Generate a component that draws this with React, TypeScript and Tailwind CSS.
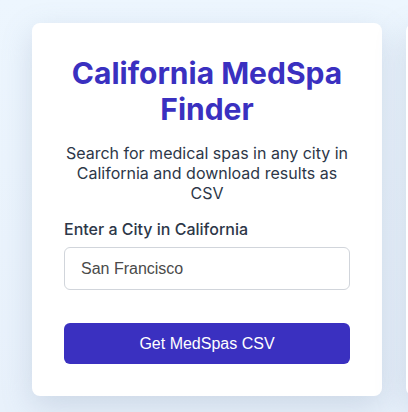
import React, { useState } from 'react';

const App: React.FC = () => {
  const [city, setCity] = useState('San Francisco');

  return (
    <div className="min-h-screen w-full overflow-hidden bg-gradient-to-b from-[#edf6fe] to-[#e8f1fb] pt-[23px] pl-8">
      <div className="flex gap-6 items-start">
        <div
          className="w-[350px] shrink-0 bg-white rounded-lg p-8 shadow-[0_10px_30px_rgba(120,140,170,0.25)]"
          style={{ fontFamily: 'Inter, "Noto Sans", sans-serif' }}
        >
          <h1 className="text-3xl font-bold text-center text-[#3a30c0] mb-4">California MedSpa Finder</h1>
          <p className="text-base leading-5 text-center text-[#2d3748] mb-4">
            Search for medical spas in any city in California and download results as CSV
          </p>
          <label className="block text-base leading-5 font-medium text-[#2d3748] mb-2">Enter a City in California</label>
          <input
            value={city}
            onChange={(e) => setCity(e.target.value)}
            className="w-full h-[43px] px-4 border border-[#d1d5db] rounded-md text-base text-[#4a4a4a] outline-none"
            style={{ fontFamily: '"Liberation Sans", Arial, sans-serif' }}
          />
          <button
            className="mt-[33px] w-full h-[41px] rounded-md bg-[#3a30c0] text-white text-base"
            style={{ fontFamily: '"Liberation Sans", Arial, sans-serif' }}
          >
            Get MedSpas CSV
          </button>
        </div>
        <div className="w-[350px] h-[373px] shrink-0 bg-white rounded-lg shadow-[0_10px_30px_rgba(120,140,170,0.25)]" />
      </div>
    </div>
  );
};

export default App;
